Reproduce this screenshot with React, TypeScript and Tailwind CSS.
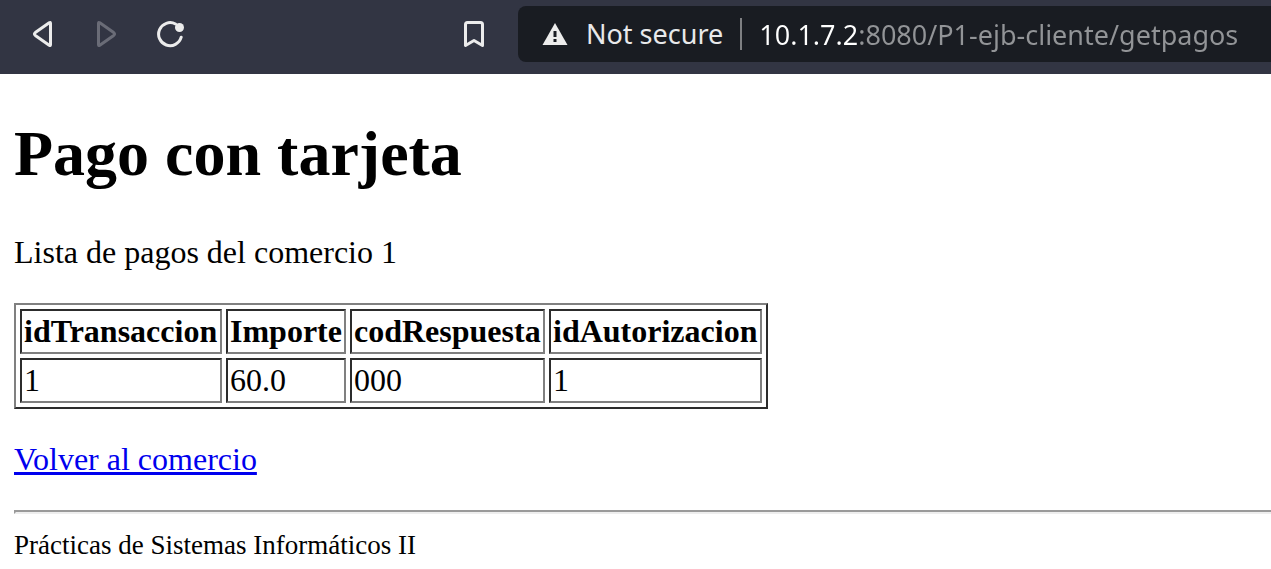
const pagos = [
  { idTransaccion: '1', importe: '60.0', codRespuesta: '000', idAutorizacion: '1' },
];

const columns = [
  { name: 'idTransaccion', width: 'w-[202px]' },
  { name: 'Importe', width: 'w-[120px]' },
  { name: 'codRespuesta', width: 'w-[195px]' },
  { name: 'idAutorizacion', width: 'w-[213px]' },
];

const cell =
  'border-2 border-t-[#2c2c2c] border-l-[#2c2c2c] border-r-[#808080] border-b-[#808080] p-0.5 text-left';

function Toolbar() {
  return (
    <header className="flex h-[74px] items-start bg-[#323543] pt-1.5 font-['Noto_Sans',sans-serif]">
      <nav className="flex h-14 flex-1 items-center pl-7 text-[#ececec]" aria-label="Navegación">
        <button type="button" aria-label="Back" className="mr-9 size-7">
          <svg viewBox="0 0 28 28" className="size-7" fill="none" stroke="currentColor" strokeWidth="3" strokeLinejoin="round">
            <path d="M22.5 3.2v21.6Q22.500 26 21.2 25.2L7.3 15.4Q5.500 14 7.3 12.600L21.2 2.8Q22.500 2 22.500 3.2Z" />
          </svg>
        </button>
        <button type="button" aria-label="Forward" disabled className="mr-9 size-7 text-[#6a6c77]">
          <svg viewBox="0 0 28 28" className="size-7" fill="none" stroke="currentColor" strokeWidth="3" strokeLinejoin="round">
            <path d="M6.5 3.2v21.6Q6.5 26 7.8 25.2L21.7 15.4Q23.5 14 21.7 12.6L7.8 2.8Q6.5 2 6.5 3.2Z" />
          </svg>
        </button>
        <button type="button" aria-label="Reload" className="size-7">
          <svg viewBox="0 0 28 28" className="size-7" fill="none" stroke="currentColor" strokeWidth="3" strokeLinecap="round">
            <path d="M19.5 4A11.5 11.5 0 1 0 25.2 17.2" />
            <circle cx="23.5" cy="7.5" r="4.5" fill="currentColor" stroke="none" />
          </svg>
        </button>
        <button type="button" aria-label="Bookmark" className="mr-[30px] ml-auto size-7">
          <svg viewBox="0 0 28 28" className="size-7" fill="none" stroke="currentColor" strokeWidth="3" strokeLinejoin="round">
            <path d="M7.5 2.5h13q2 0 2 2v21l-8.5-5-8.5 5v-21q0-2 2-2Z" />
          </svg>
        </button>
      </nav>
      <div className="flex h-14 w-[753px] shrink-0 items-center rounded-l-lg bg-[#191c22] pl-6 text-[27px]">
        <svg viewBox="0 0 26 24" className="h-6 w-[26px] shrink-0" aria-hidden="true">
          <path d="M13 1 25.5 23H.5Z" fill="#ececec" />
          <path d="M11.5 9h3v6h-3zM11.5 17h3v3h-3z" fill="#191c22" />
        </svg>
        <span className="ml-[18px] shrink-0 whitespace-nowrap text-[#e8e9eb]">Not secure</span>
        <span className="mx-[17px] h-8 w-0.5 shrink-0 bg-[#7e7f82]" />
        <input
          type="text"
          aria-label="Address"
          defaultValue="10.1.7.2:8080/P1-ejb-cliente/getpagos"
          className="h-14 min-w-0 flex-1 bg-[linear-gradient(to_right,#ffffff_99px,#929497_99px)] bg-clip-text text-transparent outline-none"
        />
      </div>
    </header>
  );
}

export default function App() {
  return (
    <div className="min-h-screen bg-white">
      <Toolbar />
      <main className="pt-[43px] pl-3.5 font-['Liberation_Serif',serif] text-[32px] leading-[37px] text-black">
        <h1 className="text-[64px] leading-[74px] font-bold">Pago con tarjeta</h1>
        <p className="mt-[43px]">Lista de pagos del comercio 1</p>
        <table className="my-8 border-separate border-spacing-1 border-2 border-t-[#808080] border-l-[#808080] border-r-[#2c2c2c] border-b-[#2c2c2c]">
          <thead>
            <tr>
              {columns.map((c) => (
                <th key={c.name} scope="col" className={`${cell} ${c.width}`}>{c.name}</th>
              ))}
            </tr>
          </thead>
          <tbody>
            {pagos.map((p) => (
              <tr key={p.idTransaccion}>
                <td className={cell}>{p.idTransaccion}</td>
                <td className={cell}>{p.importe}</td>
                <td className={cell}>{p.codRespuesta}</td>
                <td className={cell}>{p.idAutorizacion}</td>
              </tr>
            ))}
          </tbody>
        </table>
        <p>
          <a href="#comercio" className="text-[#0000ee] underline">Volver al comercio</a>
        </p>
        <hr className="mt-8 h-1 border-2 border-r-0 border-t-[#9a9a9a] border-l-[#9a9a9a] border-b-[#eeeeee]" />
        <footer className="mt-4 text-[27px] leading-[30px]">Prácticas de Sistemas Informáticos II</footer>
      </main>
    </div>
  );
}
